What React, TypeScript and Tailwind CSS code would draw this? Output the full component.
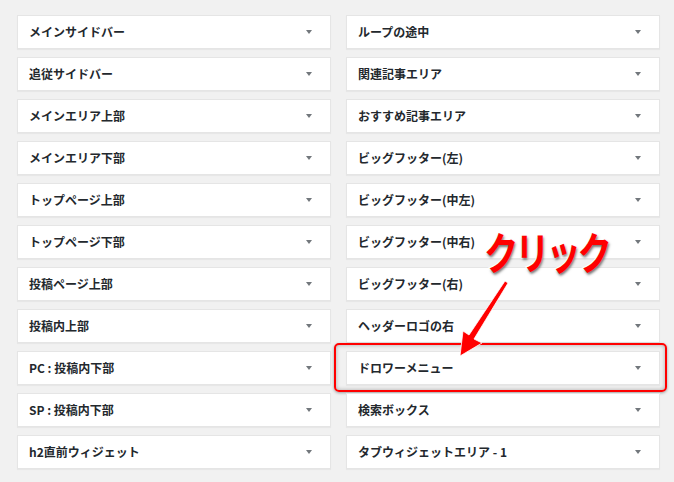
import React from "react";

const left = [
  "メインサイドバー",
  "追従サイドバー",
  "メインエリア上部",
  "メインエリア下部",
  "トップページ上部",
  "トップページ下部",
  "投稿ページ上部",
  "投稿内上部",
  "PC : 投稿内下部",
  "SP : 投稿内下部",
  "h2直前ウィジェット",
];

const right = [
  "ループの途中",
  "関連記事エリア",
  "おすすめ記事エリア",
  "ビッグフッター(左)",
  "ビッグフッター(中左)",
  "ビッグフッター(中右)",
  "ビッグフッター(右)",
  "ヘッダーロゴの右",
  "ドロワーメニュー",
  "検索ボックス",
  "タブウィジェットエリア - 1",
];

function WidgetArea({ title, highlight }: { title: string; highlight?: boolean }) {
  return (
    <div className="relative">
      <div className="flex h-[34px] items-center justify-between border border-[#e5e5e5] bg-white pl-[11px] pr-[18px] shadow-[0_1px_1px_rgba(0,0,0,0.04)]">
        <span className="text-[12px] font-bold text-[#23282d]">{title}</span>
        <span className="h-0 w-0 border-x-[3.5px] border-t-[4px] border-x-transparent border-t-[#72777c]" />
      </div>
      {highlight ? (
        <div className="pointer-events-none absolute -bottom-[7px] -left-3 -right-[7px] -top-2 rounded-[5px] border-[2.5px] border-[#ff0000] shadow-[inset_0_0_4px_rgba(0,0,0,0.3),0_1px_3px_rgba(0,0,0,0.35)]" />
      ) : null}
    </div>
  );
}

export default function App() {
  return (
    <main
      className="relative h-[482px] w-[674px] overflow-hidden bg-[#f1f1f1] pl-[17px] pt-[15px]"
      style={{ fontFamily: '"Noto Sans CJK JP", "Noto Sans", sans-serif' }}
    >
      <div className="grid grid-cols-[314px_314px] gap-x-[15px]">
        <div className="flex flex-col gap-2">
          {left.map((t) => (
            <WidgetArea key={t} title={t} />
          ))}
        </div>
        <div className="flex flex-col gap-2">
          {right.map((t) => (
            <WidgetArea key={t} title={t} highlight={t === "ドロワーメニュー"} />
          ))}
        </div>
      </div>

      {/* annotation */}
      <div className="absolute left-[484px] top-[229px] origin-left scale-x-[0.78] whitespace-nowrap text-[44px] font-bold leading-none tracking-[-4px] text-[#ff0000] [-webkit-text-stroke:2.5px_#ffffff] [paint-order:stroke_fill] [text-shadow:1px_2px_3px_rgba(0,0,0,0.55)]">
        クリック
      </div>
      <svg className="absolute left-[455px] top-[280px]" width="60" height="80" viewBox="0 0 60 80">
        <path
          d="M53 3 L19 59 L27 63 L5 76 L8 51 L14 55 L50 1 Z"
          fill="#ff0000"
          stroke="#ffffff"
          strokeWidth="0.8"
          strokeLinejoin="round"
        />
      </svg>
    </main>
  );
}
